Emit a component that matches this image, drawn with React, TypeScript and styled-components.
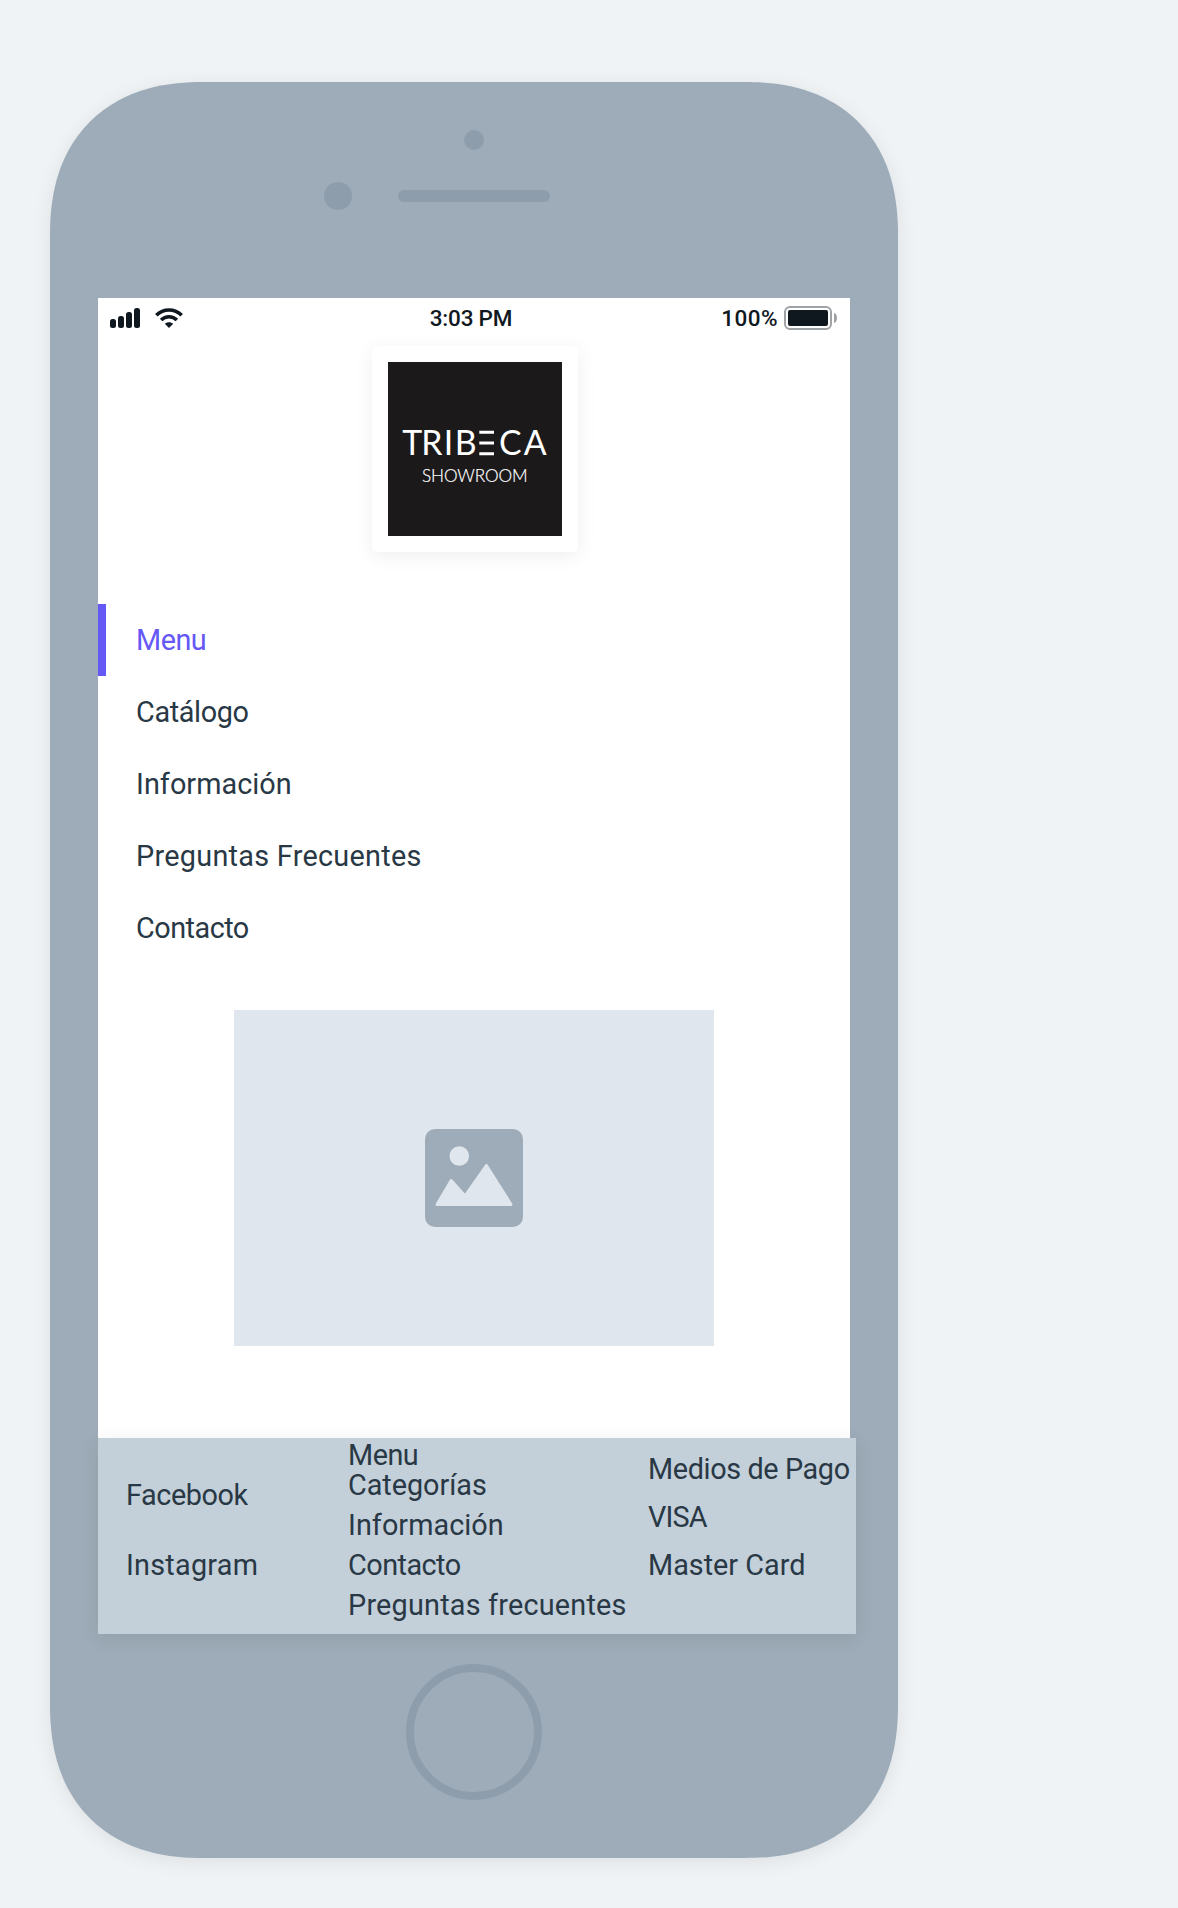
import React from "react";
import styled, { createGlobalStyle } from "styled-components";

const color = {
  page: "#eff3f6",
  body: "#9dacb8",
  hardware: "#8e9dac",
  text: "#293845",
  ink: "#10181f",
  accent: "#6558f5",
  footer: "#c3cfd9",
  placeholder: "#dfe6ed",
};

const GlobalStyle = createGlobalStyle`
  * { box-sizing: border-box; }
  body {
    margin: 0;
    background: ${color.page};
    color: ${color.text};
    font-family: Roboto, "Liberation Sans", sans-serif;
    font-size: 28.8px;
  }
`;

const Page = styled.main`
  height: 1908px;
  padding: 82px 0 0 50px;
  overflow: hidden;
`;

const Phone = styled.div`
  width: 848px;
  height: 1776px;
  display: flex;
  flex-direction: column;
  align-items: center;
  background: ${color.body};
  border-radius: 153px;
  corner-shape: superellipse(1.2);
  box-shadow: 0 4px 20px rgba(0, 0, 0, 0.08);
`;

const TopBezel = styled.div`
  width: 100%;
  height: 216px;
  padding-top: 48px;
  display: flex;
  flex-direction: column;
  align-items: center;
  gap: 32px;
`;

const Dot = styled.span<{ $size: number }>`
  width: ${(p) => p.$size}px;
  height: ${(p) => p.$size}px;
  border-radius: 50%;
  background: ${color.hardware};
`;

const SensorRow = styled.div`
  display: grid;
  grid-template-columns: 28px 152px 28px;
  column-gap: 46px;
  align-items: center;
`;

const Speaker = styled.span`
  height: 12px;
  border-radius: 6px;
  background: ${color.hardware};
`;

const Screen = styled.div`
  width: 752px;
  height: 1336px;
  display: flex;
  flex-direction: column;
  background: #fff;
`;

const HomeButton = styled.div`
  width: 136px;
  height: 136px;
  margin-top: 30px;
  border: 8px solid ${color.hardware};
  border-radius: 50%;
`;

const StatusBar = styled.header`
  height: 40px;
  padding: 0 12px;
  display: grid;
  grid-template-columns: 1fr auto 1fr;
  align-items: center;
  font-size: 22.5px;
  font-weight: 500;
  color: ${color.ink};
`;

const StatusGroup = styled.div<{ $end?: boolean }>`
  display: flex;
  align-items: center;
  justify-content: ${(p) => (p.$end ? "flex-end" : "flex-start")};
`;

const Label = styled.span<{ $spacing?: number }>`
  letter-spacing: ${(p) => p.$spacing ?? 0}px;
  white-space: nowrap;
`;

const Clock = styled(Label)`
  margin-right: 6px;
`;

const Percent = styled(Label)`
  margin-right: 6px;
`;

const Signal = styled.div`
  height: 20px;
  display: flex;
  align-items: flex-end;
  gap: 2px;
  margin-right: 15px;
`;

const SignalBar = styled.span<{ $height: number }>`
  width: 6px;
  height: ${(p) => p.$height}px;
  border-radius: 2.5px;
  background: ${color.ink};
`;

const Battery = styled.span`
  width: 48px;
  height: 24px;
  padding: 2px;
  border: 2px solid #9fa3a6;
  border-radius: 6px;
`;

const Charge = styled.span`
  display: block;
  height: 16px;
  border-radius: 2px;
  background: ${color.ink};
`;

const BatteryTip = styled.span`
  width: 3px;
  height: 10px;
  margin: 0 1px 0 2px;
  border-radius: 0 3px 3px 0 / 0 5px 5px 0;
  background: #9fa3a6;
`;

const LogoCard = styled.div`
  width: 206px;
  height: 206px;
  margin: 8px 0 0 274px;
  padding: 16px;
  border-radius: 5px;
  background: #fff;
  box-shadow: 0 4px 20px rgba(0, 0, 0, 0.07);
`;

const LogoArt = styled.svg`
  display: block;
  width: 174px;
  height: 174px;
  background: #1b191a;
  font-family: Lato, sans-serif;
  fill: #fff;
`;

const Nav = styled.nav`
  margin-top: 52px;
`;

const NavItem = styled.a<{ $active?: boolean }>`
  display: flex;
  align-items: center;
  height: 72px;
  padding-left: 30px;
  border-left: 8px solid ${(p) => (p.$active ? color.accent : "transparent")};
  color: ${(p) => (p.$active ? color.accent : color.text)};
`;

const Placeholder = styled.div`
  width: 480px;
  height: 336px;
  margin: 46px auto 0;
  display: grid;
  place-items: center;
  background: ${color.placeholder};
`;

const Footer = styled.footer`
  width: 758px;
  height: 196px;
  margin-top: auto;
  padding-left: 28px;
  display: grid;
  grid-template-columns: 222px 300px 1fr;
  background: ${color.footer};
  box-shadow: 0 4px 20px rgba(0, 0, 0, 0.08);
`;

const FooterColumn = styled.div<{ $top: number; $line: number }>`
  display: flex;
  flex-direction: column;
  padding-top: ${(p) => p.$top}px;
  line-height: ${(p) => p.$line}px;
`;

const FooterHeading = styled(Label)`
  line-height: 20px;
`;

const navItems = [
  { text: "Menu", spacing: -0.5, active: true },
  { text: "Catálogo", spacing: -0.36 },
  { text: "Información", spacing: 0.05 },
  { text: "Preguntas Frecuentes", spacing: 0.285 },
  { text: "Contacto", spacing: -0.5 },
];

function WifiIcon() {
  return (
    <svg width="28" height="20" viewBox="0 0 28 20" fill="none" stroke={color.ink}>
      <path d="M1.3 7.3C8.4.2 19.6.2 26.7 7.3" strokeWidth="3.6" />
      <path d="M6.1 12.1C10.5 7.7 17.5 7.7 21.9 12.1" strokeWidth="3.5" />
      <path d="M14 20l-4.2-4.2c2.2-2.2 6.2-2.2 8.4 0z" fill={color.ink} stroke="none" />
    </svg>
  );
}

function Logo() {
  return (
    <LogoArt viewBox="0 0 174 174">
      <text x="14.2 33.3 55.8 66.8 87.8 111 135.8" y="93" fontSize="33.8">
        TRIBECA
      </text>
      <rect x="88" y="66" width="20" height="29" fill="#1b191a" />
      <path d="M91.3 70.2H106M91.3 81H106M91.3 91.7H106" stroke="#fff" strokeWidth="3" />
      <text x="34" y="119.7" fontSize="17.2" fontWeight="300" stroke="#fff" strokeWidth="0.2" textLength="105.5">
        SHOWROOM
      </text>
    </LogoArt>
  );
}

function ImageIcon() {
  return (
    <svg width="98" height="98" viewBox="0 0 98 98">
      <rect width="98" height="98" rx="10" fill={color.body} />
      <g fill={color.placeholder} stroke={color.placeholder} strokeLinejoin="round">
        <circle cx="34.3" cy="27" r="9.8" stroke="none" />
        <path d="M12 75.5L26.2 51.6 40 67 61.4 36.6 86 75.5z" strokeWidth="3" />
      </g>
    </svg>
  );
}

export default function App() {
  return (
    <Page>
      <GlobalStyle />
      <Phone>
        <TopBezel>
          <Dot $size={20} />
          <SensorRow>
            <Dot $size={28} />
            <Speaker />
          </SensorRow>
        </TopBezel>
        <Screen>
          <StatusBar>
            <StatusGroup>
              <Signal>
                {[9, 12, 16, 20].map((h) => (
                  <SignalBar key={h} $height={h} />
                ))}
              </Signal>
              <WifiIcon />
            </StatusGroup>
            <Clock $spacing={-0.2}>3:03 PM</Clock>
            <StatusGroup $end>
              <Percent $spacing={0.44}>100%</Percent>
              <Battery>
                <Charge />
              </Battery>
              <BatteryTip />
            </StatusGroup>
          </StatusBar>
          <LogoCard>
            <Logo />
          </LogoCard>
          <Nav>
            {navItems.map((item) => (
              <NavItem key={item.text} $active={item.active}>
                <Label $spacing={item.spacing}>{item.text}</Label>
              </NavItem>
            ))}
          </Nav>
          <Placeholder>
            <ImageIcon />
          </Placeholder>
          <Footer>
            <FooterColumn $top={22} $line={70}>
              <Label $spacing={-0.42}>Facebook</Label>
              <Label $spacing={0.25}>Instagram</Label>
            </FooterColumn>
            <FooterColumn $top={7} $line={40}>
              <FooterHeading $spacing={-0.5}>Menu</FooterHeading>
              <Label $spacing={-0.04}>Categorías</Label>
              <Label $spacing={0.05}>Información</Label>
              <Label $spacing={-0.52}>Contacto</Label>
              <Label $spacing={0.21}>Preguntas frecuentes</Label>
            </FooterColumn>
            <FooterColumn $top={7} $line={48}>
              <Label $spacing={-0.38}>Medios de Pago</Label>
              <Label $spacing={-0.85}>VISA</Label>
              <Label $spacing={0}>Master Card</Label>
            </FooterColumn>
          </Footer>
        </Screen>
        <HomeButton />
      </Phone>
    </Page>
  );
}
